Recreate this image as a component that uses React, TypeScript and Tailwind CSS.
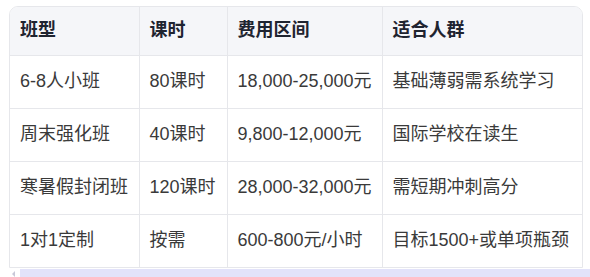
const rows = [
  ["6-8人小班", "80课时", "18,000-25,000元", "基础薄弱需系统学习"],
  ["周末强化班", "40课时", "9,800-12,000元", "国际学校在读生"],
  ["寒暑假封闭班", "120课时", "28,000-32,000元", "需短期冲刺高分"],
  ["1对1定制", "按需", "600-800元/小时", "目标1500+或单项瓶颈"],
];

const headers = ["班型", "课时", "费用区间", "适合人群"];
const widths = ["w-[129px]", "w-[88px]", "w-[155px]", "w-[200px]"];

const App = () => {
  return (
    <div
      className="w-[590px] h-[277px] overflow-hidden bg-white"
      style={{ fontFamily: '"Liberation Sans", "Noto Sans CJK SC", sans-serif' }}
    >
      <div className="pt-[6px] pl-[9px]">
        <div className="w-[574px] rounded-t-[9px] border border-[#e6e7eb] overflow-hidden">
          <table className="w-full border-collapse text-[18px] table-fixed">
            <thead>
              <tr className="h-[48px] bg-[#f5f6f9]">
                {headers.map((h, i) => (
                  <th
                    key={h}
                    className={`${widths[i]} text-left font-bold text-[#1f2430] px-[10px] border-l border-[#e6e7eb] first:border-l-0`}
                  >
                    {h}
                  </th>
                ))}
              </tr>
            </thead>
            <tbody>
              {rows.map((r) => (
                <tr key={r[0]} className="h-[53px] border-t border-[#e6e7eb]">
                  {r.map((c, i) => (
                    <td
                      key={i}
                      className="px-[10px] text-[#3a3a3a] whitespace-nowrap border-l border-[#e6e7eb] first:border-l-0"
                    >
                      {c}
                    </td>
                  ))}
                </tr>
              ))}
            </tbody>
          </table>
        </div>
      </div>
      <div className="flex items-center mt-[1px] h-[9px]">
        <span className="ml-[12px] w-0 h-0 border-y-[3px] border-y-transparent border-r-[3px] border-r-[#c8c8d8]" />
        <div className="ml-[5px] flex-1 h-[9px] bg-[#e2e2fa]" />
      </div>
    </div>
  );
};

export default App;
